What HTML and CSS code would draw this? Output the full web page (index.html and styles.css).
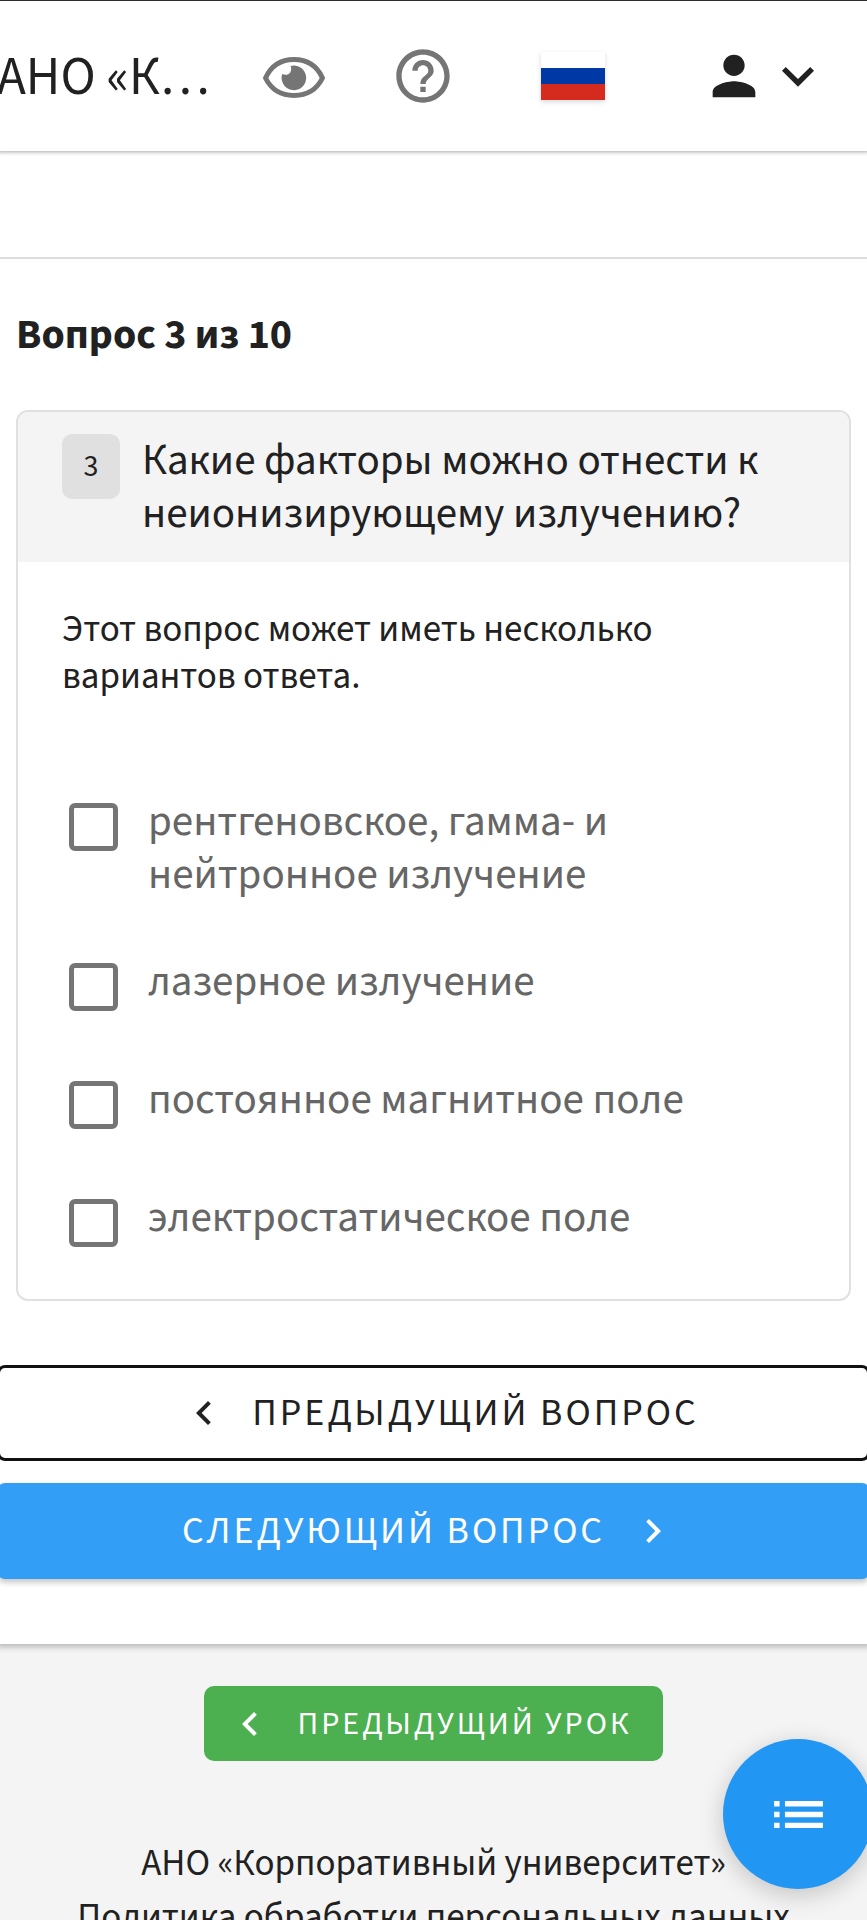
FILE: index.html
```html
<!DOCTYPE html>
<html lang="ru">
<head>
  <meta charset="UTF-8" />
  <meta name="viewport" content="width=device-width, initial-scale=1.0"/>
  <title>Вопрос 3 из 10</title>
  <link rel="stylesheet" href="styles.css">
</head>
<body>

<div class="page">
  <header class="topbar">
    <a class="brand" href="#">АНО «К…</a>
    <nav class="tools">
      <button class="tool" aria-label="Версия для слабовидящих">
        <svg class="eye" viewBox="0 0 64 44">
          <path d="M3.500 24C9 12 19 5.500 32 5.500S55 12 60.500 24C55 35 45 41.500 32 41.500S9 35 3.500 24Z" fill="none" stroke="#757575" stroke-width="5" stroke-linejoin="round"/>
          <path d="M28.500 12a12.300 12.300 0 1 1-8.300 8c3 1.500 6.500.8 8-1.600 1.300-2.200 1.300-4.400.3-6.400Z" fill="#757575"/>
        </svg>
      </button>
      <button class="tool" aria-label="Помощь">
        <svg class="icon" viewBox="0 0 24 24" fill="#757575"><path d="M11 18h2v-2h-2v2zm1-16C6.480 2 2 6.480 2 12s4.480 10 10 10 10-4.480 10-10S17.520 2 12 2zm0 18c-4.410 0-8-3.590-8-8s3.590-8 8-8 8 3.590 8 8-3.590 8-8 8zm0-14c-2.210 0-4 1.790-4 4h2c0-1.100.9-2 2-2s2 .9 2 2c0 2-3 1.750-3 5h2c0-2.250 3-2.500 3-5 0-2.210-1.790-4-4-4z"/></svg>
      </button>
      <button class="tool flag" aria-label="Русский"></button>
      <button class="tool user" aria-label="Профиль">
        <svg class="icon" viewBox="0 0 24 24" fill="#212121"><path d="M12 12c2.210 0 4-1.790 4-4s-1.790-4-4-4-4 1.790-4 4 1.790 4 4 4zm0 2c-2.670 0-8 1.340-8 4v2h16v-2c0-2.660-5.330-4-8-4z"/></svg>
        <svg class="icon" viewBox="0 0 24 24" fill="#212121"><path d="M7.410 8.590 12 13.170l4.590-4.580L18 10l-6 6-6-6 1.410-1.410z"/></svg>
      </button>
    </nav>
  </header>

  <div class="breadcrumbs"></div>

  <main class="content">
    <h1 class="counter">Вопрос 3 из 10</h1>

    <section class="card">
      <div class="card-head">
        <span class="number">3</span>
        <h2 class="question">Какие факторы можно отнести к неионизирующему излучению?</h2>
      </div>
      <div class="card-body">
        <p class="hint">Этот вопрос может иметь несколько вариантов ответа.</p>
        <label class="option">
          <input type="checkbox">
          <span>рентгеновское, гамма- и нейтронное излучение</span>
        </label>
        <label class="option">
          <input type="checkbox">
          <span>лазерное излучение</span>
        </label>
        <label class="option">
          <input type="checkbox">
          <span>постоянное магнитное поле</span>
        </label>
        <label class="option">
          <input type="checkbox">
          <span>электростатическое поле</span>
        </label>
      </div>
    </section>

    <div class="pager">
      <button class="btn outline">
        <svg class="arrow" viewBox="0 0 24 24"><path d="M15.410 7.410 14 6l-6 6 6 6 1.410-1.410L10.830 12z"/></svg>
        Предыдущий вопрос
      </button>
      <button class="btn primary">
        Следующий вопрос
        <svg class="arrow" viewBox="0 0 24 24"><path d="M10 6 8.590 7.410 13.170 12l-4.580 4.590L10 18l6-6z"/></svg>
      </button>
    </div>
  </main>

  <footer class="footer">
    <button class="btn lesson">
      <svg class="arrow" viewBox="0 0 24 24"><path d="M15.410 7.410 14 6l-6 6 6 6 1.410-1.410L10.830 12z"/></svg>
      Предыдущий урок
    </button>
    <a href="#">АНО «Корпоративный университет»</a>
    <a href="#">Политика обработки персональных данных</a>
  </footer>
</div>

<button class="fab" aria-label="Содержание">
  <svg viewBox="0 0 24 24" fill="#fff"><path d="M3 13h2v-2H3v2zm0 4h2v-2H3v2zm0-8h2V7H3v2zm4 4h14v-2H7v2zm0 4h14v-2H7v2zM7 7v2h14V7H7z"/></svg>
</button>

</body>
</html>
```
FILE: styles.css
```css
* { box-sizing: border-box; }

body {
  margin: 0; background: #f4f4f4; color: #212121;
  font-family: "Source Sans 3", "Source Sans Pro", "Noto Sans CJK KR", "Noto Sans", sans-serif;
}

h1, h2, p { margin: 0; }
a { color: inherit; text-decoration: none; }

button {
  font: inherit; color: inherit;
  background: none; border: none; padding: 0; cursor: pointer;
}

.page {
  height: 100vh; overflow-x: hidden; overflow-y: auto;
  scrollbar-width: none;
}

/* top bar */
.topbar {
  display: flex; justify-content: space-between; align-items: center;
  height: 151px; padding-right: 37px;
  background: #fff; border-top: 1px solid #2f2b30;
  box-shadow: 0 -1px 4px 2px rgba(0,0,0,0.35);
  position: relative; z-index: 2;
}

.brand {
  font-size: 53px; line-height: 56px; white-space: nowrap;
  margin-left: -3px; padding-top: 4px;
}

.tools { display: flex; align-items: center; }
.tool { display: flex; align-items: center; }
.icon { width: 64px; height: 64px; display: block; }
.eye { width: 64px; height: 44px; display: block; margin-right: 65px; }

.flag {
  width: 64px; height: 48px; margin: 0 97px 0 86px;
  background: linear-gradient(#fff 33%, #0039a6 33% 67%, #d52b1e 67%);
  box-shadow: 0 2px 5px rgba(0,0,0,0.15);
}

.breadcrumbs {
  height: 108px; background: #fff;
  border-bottom: 2px solid #ddd;
  position: relative; z-index: 1;
}

/* question */
.content {
  background: #fff; padding: 48px 0 65px;
  box-shadow: 0 0 6px 3px rgba(0,0,0,0.25);
  position: relative;
}

.counter {
  font-size: 42px; line-height: 56px; font-weight: 700;
  padding: 0 16px; margin-bottom: 47px;
}

.card {
  margin: 0 16px; border: 2px solid #e0e0e0; border-radius: 12px;
  overflow: hidden;
}

.card-head {
  display: flex; align-items: flex-start; gap: 22px;
  background: #f4f4f4; padding: 22px 44px;
}

.number {
  flex: none; width: 58px; height: 65px; border-radius: 10px;
  background: #e0e0e0; font-size: 30px; line-height: 65px; text-align: center;
}

.question { font-size: 43px; line-height: 53px; font-weight: 400; }

.card-body { padding: 44px 44px 17px; }
.hint { font-size: 37px; line-height: 47px; margin-bottom: 68px; }

.option {
  display: flex; align-items: flex-start; gap: 30px;
  min-height: 118px; padding: 27px 0 27px 7px;
  font-size: 43px; line-height: 53px; color: #666; cursor: pointer;
}

.option input {
  appearance: none; flex: none;
  width: 49px; height: 48px; margin: 8px 0 0;
  border: 5px solid #757575; border-radius: 6px; background: #fff;
}

.option input:checked { background: #2196f3; }

/* buttons */
.pager {
  display: flex; flex-direction: column; gap: 22px;
  margin: 64px -3px 0;
}

.btn {
  display: flex; justify-content: center; align-items: center; gap: 24px;
  height: 96px; border-radius: 8px;
  font-size: 38px; text-transform: uppercase; letter-spacing: 3px;
}

.arrow { width: 48px; height: 48px; fill: currentColor; }
.outline { border: 3px solid #111; background: #fff; padding-left: 12px; }

.primary {
  background: #339ef5; color: #fff; padding-right: 8px;
  box-shadow: 0 3px 6px rgba(0,0,0,0.25);
}

/* footer */
.footer {
  display: flex; flex-direction: column; align-items: center;
  padding: 42px 16px 32px;
  font-size: 37px; line-height: 54px;
}

.lesson {
  height: 75px; border-radius: 10px; padding: 0 32px 0 22px;
  margin-bottom: 76px; background: #4caf50; color: #fff;
  font-size: 32px;
}

.fab {
  position: fixed; right: -6px; bottom: 31px;
  display: flex; justify-content: center; align-items: center;
  width: 150px; height: 150px; border-radius: 50%;
  background: #2196f3;
  box-shadow: 0 6px 24px rgba(0,0,0,0.2);
}

.fab svg { width: 65px; height: 65px; }
```
